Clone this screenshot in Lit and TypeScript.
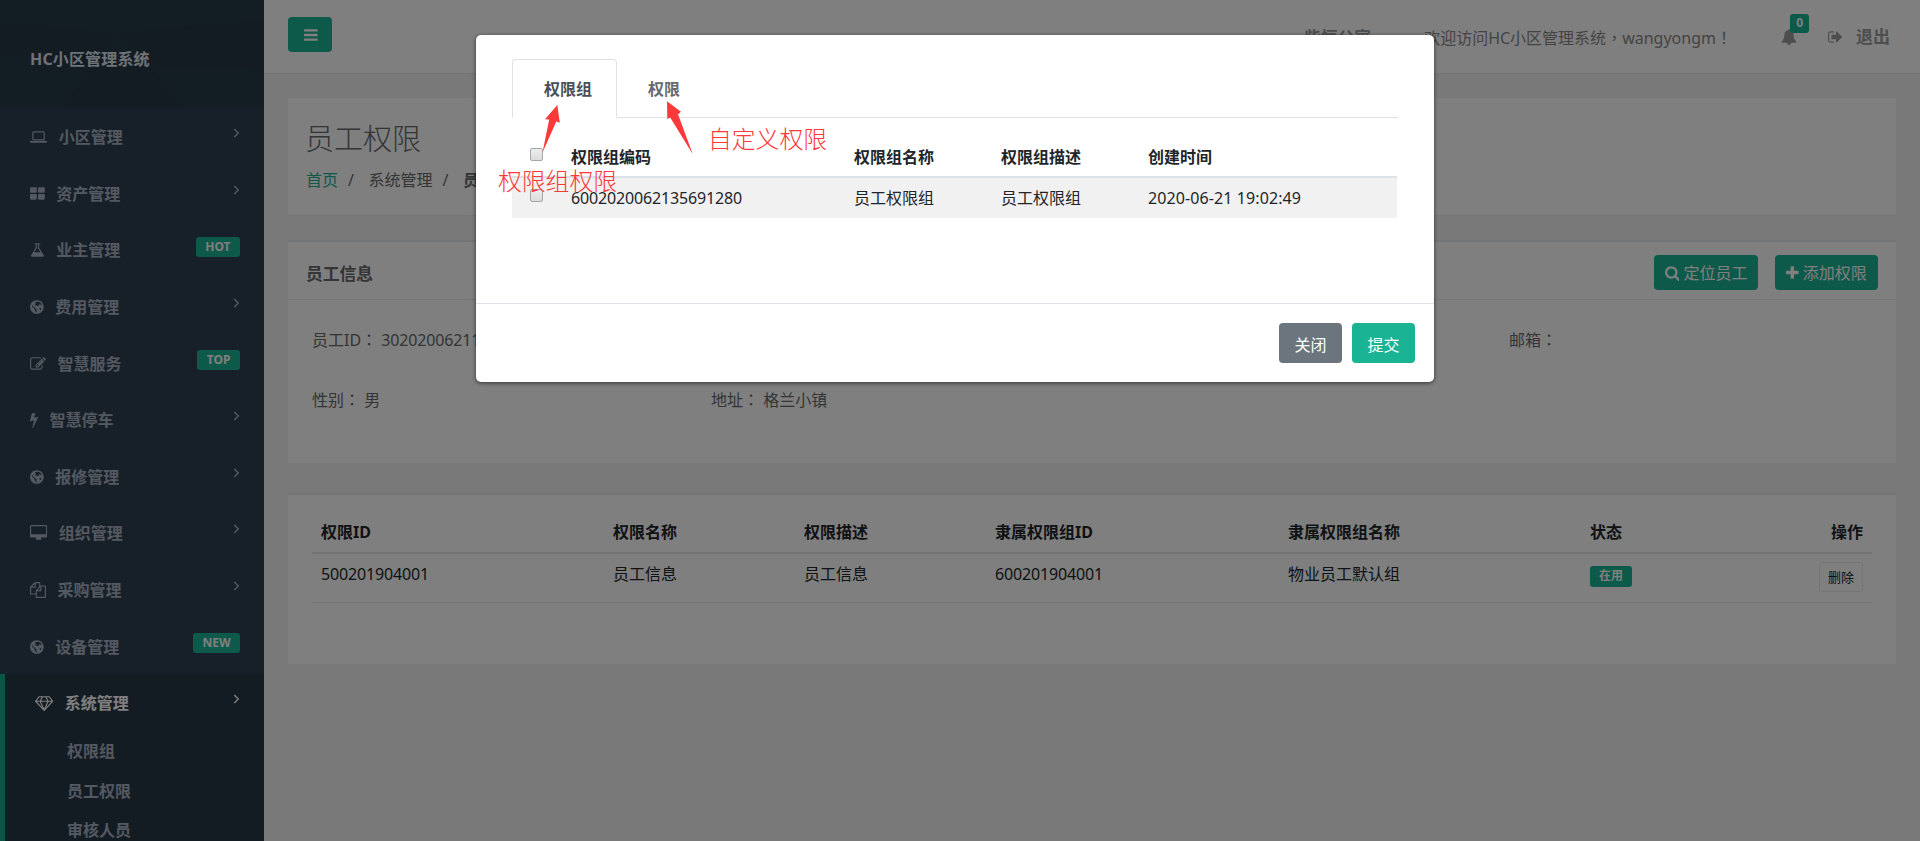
import { LitElement, html, css, svg, nothing } from "lit";
import { customElement, state } from "lit/decorators.js";
import { classMap } from "lit/directives/class-map.js";

/* Icon outlines on a 1792-unit em, y axis pointing up from the baseline. */
const ICONS: Record<string, [number, string]> = {
  bars: [1536, "M1536 192v-128q0 -26 -19 -45t-45 -19h-1408q-26 0 -45 19t-19 45v128q0 26 19 45t45 19h1408q26 0 45 -19t19 -45zM1536 704v-128q0 -26 -19 -45t-45 -19h-1408q-26 0 -45 19t-19 45v128q0 26 19 45t45 19h1408q26 0 45 -19t19 -45zM1536 1216v-128q0 -26 -19 -45t-45 -19h-1408q-26 0 -45 19t-19 45v128q0 26 19 45t45 19h1408q26 0 45 -19t19 -45z"],
  laptop: [1920, "M416 256q-66 0 -113 47t-47 113v704q0 66 47 113t113 47h1088q66 0 113 -47t47 -113v-704q0 -66 -47 -113t-113 -47h-1088zM384 1120v-704q0 -13 9.5 -22.5t22.5 -9.5h1088q13 0 22.5 9.5t9.5 22.5v704q0 13 -9.5 22.5t-22.5 9.5h-1088q-13 0 -22.5 -9.5t-9.5 -22.5zM1760 192h160v-96q0 -40 -47 -68t-113 -28h-1600q-66 0 -113 28t-47 68v96h160h1600zM1040 96q16 0 16 16t-16 16h-160q-16 0 -16 -16t16 -16h160z"],
  th: [1664, "M768 512v-384q0 -52 -38 -90t-90 -38h-512q-52 0 -90 38t-38 90v384q0 52 38 90t90 38h512q52 0 90 -38t38 -90zM768 1280v-384q0 -52 -38 -90t-90 -38h-512q-52 0 -90 38t-38 90v384q0 52 38 90t90 38h512q52 0 90 -38t38 -90zM1664 512v-384q0 -52 -38 -90t-90 -38h-512q-52 0 -90 38t-38 90v384q0 52 38 90t90 38h512q52 0 90 -38t38 -90zM1664 1280v-384q0 -52 -38 -90t-90 -38h-512q-52 0 -90 38t-38 90v384q0 52 38 90t90 38h512q52 0 90 -38t38 -90z"],
  flask: [1664, "M1527 88q56 -89 21.5 -152.5t-140.5 -63.5h-1152q-106 0 -140.5 63.5t21.5 152.5l503 793v399h-64q-26 0 -45 19t-19 45t19 45t45 19h512q26 0 45 -19t19 -45t-19 -45t-45 -19h-64v-399zM748 813l-272 -429h712l-272 429l-20 31v37v399h-128v-399v-37z"],
  globe: [1536, "M768 1408q209 0 385.500 -103t279.500 -279.500t103 -385.500t-103 -385.500t-279.500 -279.500t-385.500 -103t-385.500 103t-279.500 279.500t-103 385.500t103 385.500t279.500 279.500t385.500 103zM1060 1180L900 1250L780 1160L640 1240L560 1130L690 1040L560 930L640 790L780 850L850 720L1010 780L960 900L1110 960L1240 840L1300 960L1180 1080zM250 900L330 760L420 640L560 560L640 420L760 330L700 180L820 60L640 110L540 300L470 470L320 600L230 760zM1240 470L1120 560L1060 440L1130 290L1240 340z"],
  edit: [1792, "M888 352l116 116l-152 152l-116 -116v-56h96v-96h56zM1328 1072q-16 16 -33 -1l-350 -350q-17 -17 -1 -33t33 1l350 350q17 17 1 33zM1408 478v-190q0 -119 -84.500 -203.500t-203.500 -84.500h-832q-119 0 -203.500 84.500t-84.500 203.500v832q0 119 84.500 203.500t203.500 84.500h832q63 0 117 -25q15 -7 18 -23q3 -17 -9 -29l-49 -49q-14 -14 -32 -8q-23 6 -45 6h-832q-66 0 -113 -47t-47 -113v-832q0 -66 47 -113t113 -47h832q66 0 113 47t47 113v126q0 13 9 22l64 64q15 15 35 7t20 -29zM1312 1216l288 -288l-672 -672h-288v288zM1756 1084l-92 -92l-288 288l92 92q28 28 68 28t68 -28l152 -152q28 -28 28 -68t-28 -68z"],
  bolt: [896, "M885 970q18 -20 7 -44l-540 -1157q-13 -25 -42 -25q-4 0 -14 2q-17 5 -25.500 19t-4.500 30l197 808l-406 -101q-4 -1 -12 -1q-18 0 -31 11q-18 15 -13 39l201 825q4 14 16 23t28 9h328q19 0 32 -12.500t13 -29.500q0 -8 -5 -18l-171 -463l396 98q8 2 12 2q19 0 34 -15z"],
  desktop: [1920, "M1792 544v832q0 13 -9.500 22.500t-22.500 9.500h-1600q-13 0 -22.500 -9.500t-9.500 -22.500v-832q0 -13 9.500 -22.500t22.500 -9.500h1600q13 0 22.500 9.500t9.500 22.500zM1920 1376v-1088q0 -66 -47 -113t-113 -47h-544q0 -37 16 -77.500t32 -71t16 -43.500q0 -26 -19 -45t-45 -19h-512q-26 0 -45 19t-19 45q0 14 16 44t32 70t16 78h-544q-66 0 -113 47t-47 113v1088q0 66 47 113t113 47h1600q66 0 113 -47t47 -113z"],
  copy: [1792, "M1696 1152q40 0 68 -28t28 -68v-1216q0 -40 -28 -68t-68 -28h-960q-40 0 -68 28t-28 68v288h-544q-40 0 -68 28t-28 68v672q0 40 20 88t48 76l408 408q28 28 76 48t88 20h416q40 0 68 -28t28 -68v-328q68 40 128 40h416zM1152 939l-299 -299h299v299zM512 1323l-299 -299h299v299zM708 676l316 316v416h-384v-416q0 -40 -28 -68t-68 -28h-416v-640h512v256q0 40 20 88t48 76zM1664 -128v1152h-384v-416q0 -40 -28 -68t-68 -28h-416v-640h896z"],
  diamond: [2048, "M212 768l623 -665l-300 665h-323zM1024 -4l349 772h-698zM538 896l204 384h-262l-288 -384h346zM1213 103l623 665h-323zM683 896h682l-204 384h-274zM1510 896h346l-288 384h-262zM1651 1382l384 -512q14 -18 13 -41.500t-17 -40.500l-960 -1024q-18 -20 -47 -20t-47 20l-960 1024q-16 17 -17 40.500t13 41.500l384 512q18 26 51 26h1152q33 0 51 -26z"],
  bell: [1792, "M912 -160q0 16 -16 16q-59 0 -101.500 42.500t-42.500 101.500q0 16 -16 16t-16 -16q0 -73 51.500 -124.500t124.500 -51.500q16 0 16 16zM1728 128q0 -52 -38 -90t-90 -38h-448q0 -106 -75 -181t-181 -75t-181 75t-75 181h-448q-52 0 -90 38t-38 90q50 42 91 88t85 119.500t74.500 158.500t50 206t19.500 260q0 152 117 282.500t307 158.500q-8 19 -8 39q0 40 28 68t68 28t68 -28t28 -68q0 -20 -8 -39q190 -28 307 -158.500t117 -282.500q0 -139 19.500 -260t50 -206t74.500 -158.500t85 -119.500t91 -88z"],
  signout: [1664, "M640 96q0 -4 1 -20t0.500 -26.500t-3 -23.500t-10 -19.500t-20.500 -6.500h-320q-119 0 -203.500 84.500t-84.500 203.500v704q0 119 84.500 203.500t203.500 84.500h320q13 0 22.500 -9.500t9.500 -22.500q0 -4 1 -20t0.500 -26.500t-3 -23.500t-10 -19.500t-20.500 -6.500h-320q-66 0 -113 -47t-47 -113v-704q0 -66 47 -113t113 -47h288h11h13t11.500 -1t11.500 -3t8 -5.500t7 -9t2 -13.500zM1568 640q0 -26 -19 -45l-544 -544q-19 -19 -45 -19t-45 19t-19 45v288h-448q-26 0 -45 19t-19 45v384q0 26 19 45t45 19h448v288q0 26 19 45t45 19t45 -19l544 -544q19 -19 19 -45z"],
  search: [1664, "M1152 704q0 185 -131.500 316.500t-316.500 131.500t-316.500 -131.500t-131.500 -316.500t131.500 -316.500t316.500 -131.500t316.500 131.500t131.500 316.500zM1664 -128q0 -52 -38 -90t-90 -38q-54 0 -90 38l-343 342q-179 -124 -399 -124q-143 0 -273.500 55.500t-225 150t-150 225t-55.500 273.500t55.500 273.500t150 225t225 150t273.500 55.500t273.500 -55.500t225 -150t150 -225t55.500 -273.500q0 -220 -124 -399l343 -343q37 -37 37 -90z"],
  plus: [1408, "M1408 800v-192q0 -40 -28 -68t-68 -28h-416v-416q0 -40 -28 -68t-68 -28h-192q-40 0 -68 28t-28 68v416h-416q-40 0 -68 28t-28 68v192q0 40 28 68t68 28h416v416q0 40 28 68t68 28h192q40 0 68 -28t28 -68v-416h416q40 0 68 -28t28 -68z"],
};

const icon = (name: string, size = 16) => {
  const [w, d] = ICONS[name];
  return html`<svg width=${(w * size) / 1792} height=${size} viewBox="0 0 ${w} 1792" aria-hidden="true">
    ${svg`<path transform="translate(0 1536) scale(1 -1)" fill="currentColor" fill-rule="evenodd" d=${d}></path>`}
  </svg>`;
};

const base = css`
  * { box-sizing: border-box; }
  svg { display: block; flex: none; }
  .btn {
    display: inline-flex; align-items: center; justify-content: center;
    border-radius: 4px; background: #1ab394; color: #fff; border: 0;
    font: inherit; line-height: 24px; padding: 0; white-space: nowrap;
  }
  .n { letter-spacing: -0.15px; }
  .p { font-family: "Noto Sans CJK TC", sans-serif; line-height: 1; }
  table { border-collapse: collapse; table-layout: fixed; }
  th, td { text-align: left; padding: 0 9px; color: #212529; vertical-align: top; white-space: nowrap; }
`;

interface Item { icon: string; text: string; tag?: string; children?: string[] }

const MENU: Item[] = [
  { icon: "laptop", text: "小区管理" },
  { icon: "th", text: "资产管理" },
  { icon: "flask", text: "业主管理", tag: "HOT" },
  { icon: "globe", text: "费用管理" },
  { icon: "edit", text: "智慧服务", tag: "TOP" },
  { icon: "bolt", text: "智慧停车" },
  { icon: "globe", text: "报修管理" },
  { icon: "desktop", text: "组织管理" },
  { icon: "copy", text: "采购管理" },
  { icon: "globe", text: "设备管理", tag: "NEW" },
  { icon: "diamond", text: "系统管理", children: ["权限组", "员工权限", "审核人员"] },
];

@customElement("side-nav")
class SideNav extends LitElement {
  static styles = [base, css`
    :host { display: flex; flex-direction: column; width: 264px; flex: none; background: #2f4050; color: #a7b1c2; font-weight: 700; overflow: hidden; }
    .brand { position: relative; height: 108px; flex: none; padding: 47px 0 0 30px; line-height: 24px; color: #dfe4ed; background: #273b49; }
    .brand svg { position: absolute; inset: 0; }
    .brand span { position: relative; letter-spacing: 0.15px; }
    .group { flex: none; }
    .row { display: flex; align-items: center; height: 56.6px; padding: 2px 24px 0 30px; }
    .label { margin-left: 11.5px; flex: 1; line-height: 24px; }
    .arrow { margin-bottom: 8.500px; }
    .tag { background: #1ab394; color: #fff; font-size: 12px; line-height: 17px; height: 20px; border-radius: 3px; padding: 1px 9.500px; margin-bottom: 6.500px; }
    .open { background: #293846; border-left: 5px solid #19aa8d; height: 300px; }
    .open .row { color: #fff; }
    .row + .sub { margin-top: 1.500px; }
    .sub { height: 39.5px; line-height: 39.5px; padding-left: 62px; }
  `];
  render() {
    return html`
      <div class="brand">
        <svg width="264" height="108" viewBox="0 0 264 108">
          <path d="M0 22L118 33L94 66L0 54z M118 33L264 20V70L150 66z M150 66L186 108H62L94 66z" fill="#263644" opacity=".55"></path>
          <path d="M118 33L145 0H264V20z M94 66L62 108H0V54z" fill="#273a48"></path>
        </svg>
        <span>HC小区管理系统</span>
      </div>
      ${MENU.map((m) => html`
        <div class=${classMap({ group: true, open: !!m.children })}>
          <div class="row">
            ${icon(m.icon)}<span class="label">${m.text}</span>
            ${m.tag
              ? html`<span class="tag">${m.tag}</span>`
              : html`<svg class="arrow" width="7" height="10" viewBox="0 0 7 10"><path d="M1.300 0.900L5.300 5L1.300 9.100" fill="none" stroke="currentColor" stroke-width="1.400"></path></svg>`}
          </div>
          ${m.children ? m.children.map((c) => html`<div class="sub">${c}</div>`) : nothing}
        </div>`)}
    `;
  }
}

@customElement("top-bar")
class TopBar extends LitElement {
  static styles = [base, css`
    :host { display: flex; align-items: flex-start; height: 74px; flex: none; background: #fff; border-bottom: 1px solid #e7eaec; padding: 0 30px 0 24px; color: #888; }
    .menu { width: 44px; height: 35px; margin-top: 17px; padding-left: 2px; }
    .right { margin-left: auto; display: flex; align-items: center; height: 74px; line-height: 24px; }
    .place { font-weight: 700; font-size: 16.8px; margin-right: 53px; padding-top: 1px; color: #999c9e; }
    .hello { width: 308px; margin-right: 49px; padding-top: 1px; color: #888; white-space: nowrap; }
    .bell { position: relative; margin-right: 31px; color: #999c9e; }
    .count { position: absolute; left: 9px; top: -15px; width: 19px; height: 19px; border-radius: 3px; background: #1ab394; color: #fff; font-size: 12px; font-weight: 700; line-height: 18px; text-align: center; }
    .out { display: flex; align-items: center; color: #999c9e; font-weight: 700; font-size: 17px; gap: 13px; }
  `];
  render() {
    return html`
      <button class="btn menu">${icon("bars")}</button>
      <div class="right">
        <span class="place">柴恒公寓</span>
        <span class="hello">欢迎访问HC小区管理系统<span class="p">，</span>wangyongm<span class="p">！</span></span>
        <span class="bell">${icon("bell")}<span class="count">0</span></span>
        <span class="out">${icon("signout")}<span>退出</span></span>
      </div>`;
  }
}

@customElement("staff-page")
class StaffPage extends LitElement {
  static styles = [base, css`
    :host { display: flex; flex-direction: column; padding: 24px 24px 0; color: #676a6c; }
    .card { background: #fff; flex: none; }
    .heading { height: 118px; padding: 20px 17px 0; border-bottom: 1px solid #e7eaec; }
    h2 { margin: 0; font-size: 29px; font-weight: 300; line-height: 42px; }
    .crumbs { display: flex; margin-top: 8px; padding-left: 1px; line-height: 24px; }
    .home { color: #1ab394; }
    .sep { margin: 0 14.500px 0 10px; }
    .info { margin-top: 24px; height: 223px; border-top: 2px solid #e7eaec; }
    .title { height: 58px; display: flex; align-items: flex-start; padding: 13px 18px 0; border-bottom: 1px solid #e7eaec; }
    h5 { margin: 7px auto 0 0; font-size: 16.8px; line-height: 24px; font-weight: 700; }
    .find { width: 104px; height: 35px; margin-right: 17px; gap: 4px; }
    .add { width: 103px; height: 35px; gap: 4px; }
    .fields { display: grid; grid-template-columns: repeat(4, 399px); grid-auto-rows: 60px; padding: 27.500px 0 0 24px; line-height: 24px; }
    .mail { grid-column: 4; }
    .list { margin-top: 30px; height: 171px; border-top: 2px solid #e7eaec; padding: 16px 24px 0; }
    table { width: 1560px; }
    th { height: 42px; line-height: 24px; padding-top: 9px; border-bottom: 2px solid #e7e7e7; }
    td { height: 49px; line-height: 24px; padding-top: 8px; border-bottom: 1px solid #e7eaec; }
    .end { text-align: right; }
    .state { display: inline-block; margin-top: 2px; background: #1ab394; color: #fff; border-radius: 3px; font-weight: 700; font-size: 12px; width: 42px; height: 21px; line-height: 20px; text-align: center; }
    .del { background: #fff; color: #212529; border: 1px solid #e7eaec; border-radius: 3px; font-size: 13px; width: 44px; height: 30px; }
  `];
  render() {
    const widths = [292, 191, 191, 293, 302, 151, 140];
    const heads = ["权限ID", "权限名称", "权限描述", "隶属权限组ID", "隶属权限组名称", "状态", "操作"];
    const colon = html`<span class="p">：</span>`;
    return html`
      <section class="card heading">
        <h2>员工权限</h2>
        <div class="crumbs"><span class="home">首页</span><span class="sep">/</span><span>系统管理</span><span class="sep">/</span><b>员工权限</b></div>
      </section>
      <section class="card info">
        <div class="title">
          <h5>员工信息</h5>
          <button class="btn find">${icon("search")}定位员工</button>
          <button class="btn add">${icon("plus")}添加权限</button>
        </div>
        <div class="fields">
          <div>员工ID${colon} <span class="n">302020062113</span></div>
          <div class="mail">邮箱${colon}</div>
          <div>性别${colon} 男</div>
          <div>地址${colon} 格兰小镇</div>
        </div>
      </section>
      <section class="card list">
        <table>
          <colgroup>${widths.map((w) => html`<col width=${w}>`)}</colgroup>
          <thead><tr>${heads.map((h, i) => html`<th class=${i === 6 ? "end" : ""}>${h}</th>`)}</tr></thead>
          <tbody><tr>
            <td class="n">500201904001</td><td>员工信息</td><td>员工信息</td><td class="n">600201904001</td>
            <td>物业员工默认组</td><td><span class="state">在用</span></td><td class="end"><button class="btn del">删除</button></td>
          </tr></tbody>
        </table>
      </section>`;
  }
}

@customElement("grant-dialog")
class GrantDialog extends LitElement {
  @state() tab = 0;
  static styles = [base, css`
    :host { position: relative; display: block; width: 958px; height: 347px; background: #fff; border-radius: 5px; box-shadow: 0 1px 4px rgba(0, 0, 0, .6); color: #212529; }
    .body { height: 268px; padding: 24px 36px 0; }
    .tabs { display: flex; height: 59px; border-bottom: 1px solid #dee2e6; }
    .tab { height: 59px; padding: 17px 30px 0; border: 1px solid transparent; border-radius: 4px 4px 0 0; font-weight: 700; line-height: 24px; color: #676a6c; white-space: nowrap; }
    .on { color: #495057; background: #fff; border-color: #dee2e6 #dee2e6 #fff; width: 105px; padding-left: 31px; }
    table { width: 885px; margin-top: 18px; }
    th, td { line-height: 24px; padding: 8.500px 9px 0; }
    th { height: 41px; border-bottom: 2px solid #dee2e6; }
    td { height: 41px; background: #f1f1f1; padding-top: 8px; }
    th:first-child, td:first-child { padding-left: 18px; }
    input { display: block; appearance: none; width: 13px; height: 13px; margin: 3px 0 0; border: 1px solid #a6a6a6; border-radius: 2px; background: linear-gradient(#ececec, #dcdcdc); }
    td input { margin-top: 3px; }
    .date { letter-spacing: 0.1px; }
    .foot { height: 79px; border-top: 1px solid #dee2e6; display: flex; justify-content: flex-end; gap: 10px; padding: 19px 19px 0; }
    .foot .btn { width: 63px; height: 40px; padding-top: 3px; }
    .foot .close { background: #6c757d; }
    .marks { position: absolute; left: 0; top: 0; }
    .note { position: absolute; color: #fc3939; font-size: 23.800px; font-weight: 300; line-height: 30px; white-space: nowrap; }
    .own { left: 232px; top: 89px; }
    .grp { left: 22px; top: 131px; }
  `];
  render() {
    return html`
      <div class="body">
        <div class="tabs">
          ${["权限组", "权限"].map((t, i) => html`<div class=${classMap({ tab: true, on: this.tab === i })} @click=${() => (this.tab = i)}>${t}</div>`)}
        </div>
        <table>
          <colgroup>${[50, 283, 147, 147, 258].map((w) => html`<col width=${w}>`)}</colgroup>
          <thead><tr><th><input type="checkbox"></th><th>权限组编码</th><th>权限组名称</th><th>权限组描述</th><th>创建时间</th></tr></thead>
          <tbody><tr><td><input type="checkbox"></td><td class="n">6002020062135691280</td><td>员工权限组</td><td>员工权限组</td><td class="date">2020-06-21 19:02:49</td></tr></tbody>
        </table>
      </div>
      <div class="foot"><button class="btn close">关闭</button><button class="btn">提交</button></div>
      <svg class="marks" width="260" height="130" viewBox="476 35 260 130" fill="#fc3939">
        <path d="M557.300 105L545 119.300L549.200 119.500L542.500 152.500L556.300 121.500L559.800 122.800z"></path>
        <path d="M667 101.300L667.300 119L670.200 117.500L692.800 154.200L678 114.200L681 111.700z"></path>
      </svg>
      <span class="note own">自定义权限</span>
      <span class="note grp">权限组权限</span>
    `;
  }
}

@customElement("app-root")
class AppRoot extends LitElement {
  static styles = [base, css`
    :host {
      display: flex; position: relative; width: 100%; height: 100vh; overflow: hidden; background: #f3f3f4;
      font-family: "Noto Sans", "Noto Sans CJK SC", sans-serif; font-size: 16px; line-height: 24px; color: #676a6c;
    }
    .main { flex: 1; min-width: 0; display: flex; flex-direction: column; }
    .shade { position: absolute; inset: 0; background: rgba(0, 0, 0, .5); display: flex; align-items: flex-start; padding: 35px 0 0 476px; }
  `];
  render() {
    return html`
      <side-nav></side-nav>
      <div class="main"><top-bar></top-bar><staff-page></staff-page></div>
      <div class="shade"><grant-dialog></grant-dialog></div>
    `;
  }
}
